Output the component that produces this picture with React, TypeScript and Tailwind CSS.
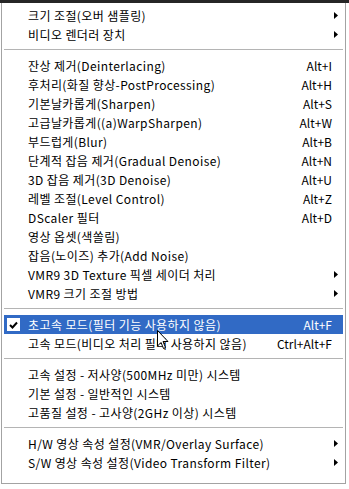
import React from "react";

type Item =
  | { kind: "sep" }
  | { kind: "item"; label: string; shortcut?: string; sub?: boolean; checked?: boolean; active?: boolean };

const ITEMS: Item[] = [
  { kind: "item", label: "크기 조절(오버 샘플링)", sub: true },
  { kind: "item", label: "비디오 렌더러 장치", sub: true },
  { kind: "sep" },
  { kind: "item", label: "잔상 제거(Deinterlacing)", shortcut: "Alt+I" },
  { kind: "item", label: "후처리(화질 향상-PostProcessing)", shortcut: "Alt+H" },
  { kind: "item", label: "기본날카롭게(Sharpen)", shortcut: "Alt+S" },
  { kind: "item", label: "고급날카롭게((a)WarpSharpen)", shortcut: "Alt+W" },
  { kind: "item", label: "부드럽게(Blur)", shortcut: "Alt+B" },
  { kind: "item", label: "단계적 잡음 제거(Gradual Denoise)", shortcut: "Alt+N" },
  { kind: "item", label: "3D 잡음 제거(3D Denoise)", shortcut: "Alt+U" },
  { kind: "item", label: "레벨 조절(Level Control)", shortcut: "Alt+Z" },
  { kind: "item", label: "DScaler 필터", shortcut: "Alt+D" },
  { kind: "item", label: "영상 옵셋(색쏠림)" },
  { kind: "item", label: "잡음(노이즈) 추가(Add Noise)" },
  { kind: "item", label: "VMR9 3D Texture 픽셀 세이더 처리", sub: true },
  { kind: "item", label: "VMR9 크기 조절 방법", sub: true },
  { kind: "sep" },
  { kind: "item", label: "초고속 모드(필터 기능 사용하지 않음)", shortcut: "Alt+F", checked: true, active: true },
  { kind: "item", label: "고속 모드(비디오 처리 필터 사용하지 않음)", shortcut: "Ctrl+Alt+F" },
  { kind: "sep" },
  { kind: "item", label: "고속 설정 - 저사양(500MHz 미만) 시스템" },
  { kind: "item", label: "기본 설정 - 일반적인 시스템" },
  { kind: "item", label: "고품질 설정 - 고사양(2GHz 이상) 시스템" },
  { kind: "sep" },
  { kind: "item", label: "H/W 영상 속성 설정(VMR/Overlay Surface)", sub: true },
  { kind: "item", label: "S/W 영상 속성 설정(Video Transform Filter)", sub: true },
];

function Arrow({ white }: { white?: boolean }) {
  return (
    <svg width="4" height="7" viewBox="0 0 4 7" className="shrink-0">
      <path d="M0 0 L4 3.5 L0 7 Z" fill={white ? "#fff" : "#000"} />
    </svg>
  );
}

function Check() {
  return (
    <span className="absolute left-[3px] top-[3px] w-[13px] h-[13px] bg-white flex items-center justify-center">
      <svg width="9" height="8" viewBox="0 0 9 8">
        <path d="M1 4 L3.5 6.5 L8 1.5" stroke="#000" strokeWidth="2" fill="none" />
      </svg>
    </span>
  );
}

export default function App() {
  return (
    <div
      className="relative w-[349px] h-[489px] bg-white overflow-hidden"
      style={{ fontFamily: '"Noto Sans CJK KR", "Noto Sans", sans-serif' }}
    >
      <div className="h-[3px] bg-[#262626]" />
      <div className="ml-[1px] w-[345px] h-[481px] border-l border-r border-b border-[#a3a3a3] bg-white pt-[3px] px-[2px]">
        {ITEMS.map((it, i) =>
          it.kind === "sep" ? (
            <div key={i} className="h-[12px] flex flex-col justify-center">
              <div className="h-px bg-[#b4b4b4]" />
              <div className="h-px bg-white" />
            </div>
          ) : (
            <div
              key={i}
              className={`relative h-[19px] flex items-center pl-[24px] pr-[5px] text-[12px] leading-none whitespace-nowrap ${
                it.active ? "bg-[#316ac5] text-white" : "text-black"
              }`}
            >
              {it.checked && <Check />}
              <span className="flex-1 tracking-[0.4px]">{it.label}</span>
              {it.shortcut && <span className="mr-[6px]">{it.shortcut}</span>}
              {it.sub && <Arrow white={it.active} />}
            </div>
          )
        )}
      </div>
      {/* mouse pointer over the highlighted row */}
      <svg
        className="absolute left-[157px] top-[330px]"
        width="12"
        height="20"
        viewBox="0 0 12 20"
      >
        <path
          d="M0.5 0.5 L0.5 16 L4 12.5 L6.5 18.5 L8.5 17.5 L6 11.5 L11 11.5 Z"
          fill="#fff"
          stroke="#000"
          strokeWidth="1"
        />
      </svg>
    </div>
  );
}
